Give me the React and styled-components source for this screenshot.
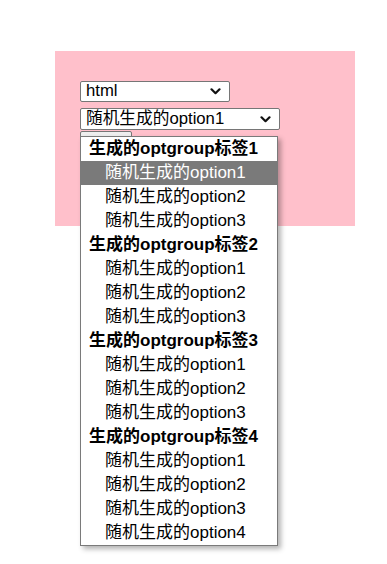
import React from 'react'
import styled, { createGlobalStyle } from 'styled-components'

const groups = [
    { label: '生成的optgroup标签1', options: ['随机生成的option1', '随机生成的option2', '随机生成的option3'] },
    { label: '生成的optgroup标签2', options: ['随机生成的option1', '随机生成的option2', '随机生成的option3'] },
    { label: '生成的optgroup标签3', options: ['随机生成的option1', '随机生成的option2', '随机生成的option3'] },
    { label: '生成的optgroup标签4', options: ['随机生成的option1', '随机生成的option2', '随机生成的option3', '随机生成的option4'] },
]

// small chevron used on the closed selects
function Chevron() {
    return (
        <svg width="11" height="7" viewBox="0 0 11 7">
            <path d="M1.5 1.3 L5.5 5.2 L9.5 1.3" fill="none" stroke="#111" strokeWidth="2.2" strokeLinecap="round" strokeLinejoin="round" />
        </svg>
    )
}

function App() {
    return (
        <>
            <GlobalStyle />
            <Page>
                <Panel>
                    <Select width={150} height={21}>
                        <span>html</span>
                        <Chevron />
                    </Select>
                    <SelectWrap>
                        <Select width={200} height={22}>
                            <span>随机生成的option1</span>
                            <Chevron />
                        </Select>
                        <Button>&nbsp;</Button>
                        <Dropdown>
                            {groups.map((g, gi) => (
                                <React.Fragment key={gi}>
                                    <GroupLabel>{g.label}</GroupLabel>
                                    {g.options.map((o, oi) => (
                                        <Option key={oi} selected={gi === 0 && oi === 0}>{o}</Option>
                                    ))}
                                </React.Fragment>
                            ))}
                        </Dropdown>
                    </SelectWrap>
                </Panel>
            </Page>
        </>
    )
}

const GlobalStyle = createGlobalStyle`
    html, body {
        margin: 0;
        background: #fff;
        font-family: "Liberation Sans", "Noto Sans CJK SC", sans-serif;
    }
    #root {
        min-height: 564px;
    }
`

const Page = styled.div`
    min-height: 564px;
    box-sizing: border-box;
    padding: 51px 0 0 55px;
`

const Panel = styled.div`
    position: relative;
    width: 300px;
    height: 175px;
    box-sizing: border-box;
    background: #ffc0cb;
    padding: 30px 25px;
    display: flex;
    flex-direction: column;
    align-items: flex-start;
    gap: 6px;
`

const SelectWrap = styled.div`
    position: relative;
    display: flex;
    flex-direction: column;
    align-items: flex-start;
    gap: 1px;
`

const Select = styled.div`
    width: ${p => p.width}px;
    height: ${p => p.height}px;
    box-sizing: border-box;
    background: #fff;
    border: 1px solid #767676;
    border-radius: 2px;
    display: flex;
    align-items: center;
    justify-content: space-between;
    padding: 0 8px 0 5px;
    font-size: 16.7px;
    color: #000;
    line-height: 1;
`

const Button = styled.div`
    width: 52px;
    height: 18px;
    box-sizing: border-box;
    background: #efefef;
    border: 1px solid #767676;
    border-radius: 2px;
`

const Dropdown = styled.div`
    position: absolute;
    z-index: 10;
    top: 28px;
    left: 0;
    width: 198px;
    box-sizing: border-box;
    background: #fff;
    border: 1px solid #7a7a7a;
    box-shadow: 3px 3px 5px rgba(0, 0, 0, 0.3);
    font-size: 17px;
    color: #000;
`

const GroupLabel = styled.div`
    height: 24px;
    line-height: 24px;
    padding-left: 8px;
    font-weight: bold;
    white-space: nowrap;
`

const Option = styled.div`
    height: 24px;
    line-height: 24px;
    padding-left: 24px;
    white-space: nowrap;
    background: ${p => (p.selected ? '#7a7a7a' : 'transparent')};
    color: ${p => (p.selected ? '#fff' : '#000')};
`

export default App
